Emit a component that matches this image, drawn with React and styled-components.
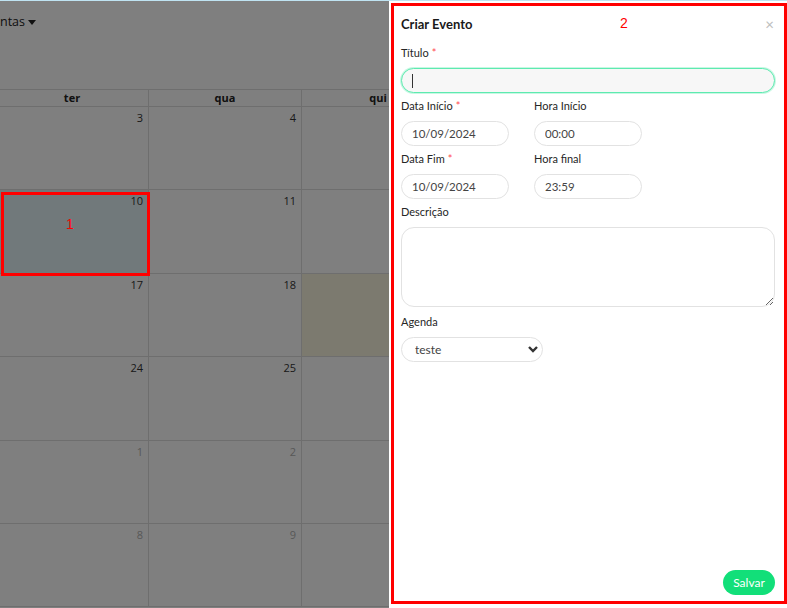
import { createGlobalStyle } from "styled-components";
import styled from "styled-components";

const GlobalStyle = createGlobalStyle`
  body {
    margin: 0;
    font-family: Lato, "Open Sans", sans-serif;
    background: #fff;
  }
`;

const Page = styled.div`
  position: relative;
  width: 787px;
  height: 608px;
  overflow: hidden;
  border-top: 1px solid #bfe3f2;
  box-sizing: border-box;
`;

const Toolbar = styled.div`
  height: 88px;
  box-sizing: border-box;
  padding-top: 12px;
  display: flex;
  align-items: flex-start;
  gap: 3px;
  font-family: "Open Sans", sans-serif;
  font-size: 12.5px;
  color: #222;
`;

const Caret = styled.span`
  display: inline-block;
  margin-top: 7px;
  width: 0;
  height: 0;
  border-left: 4px solid transparent;
  border-right: 4px solid transparent;
  border-top: 5px solid #222;
`;

const Grid = styled.div`
  margin-left: -310px;
  display: grid;
  grid-template-columns: repeat(7, 153px);
  border-top: 1px solid #ddd;
`;

const HeadCell = styled.div`
  height: 17px;
  box-sizing: border-box;
  border-right: 1px solid #ddd;
  border-bottom: 1px solid #ddd;
  font-family: "Open Sans", sans-serif;
  font-size: 11px;
  font-weight: 700;
  color: #222;
  text-align: center;
  line-height: 16px;
`;

const DayCell = styled.div`
  height: 83.4px;
  box-sizing: border-box;
  border-right: 1px solid #ddd;
  border-bottom: 1px solid #ddd;
  background: ${(p) => (p.today ? "#f8f4de" : p.selected ? "#e3f3f7" : "transparent")};
  text-align: right;
  padding: 3px 5px 0 0;
  font-family: "Open Sans", sans-serif;
  font-size: 11px;
  color: ${(p) => (p.other ? "#b0b0b0" : "#333")};
`;

const Mask = styled.div`
  position: absolute;
  inset: 0;
  background: rgba(0, 0, 0, 0.5);
`;

const Drawer = styled.div`
  position: absolute;
  top: 0;
  right: 0;
  bottom: 0;
  width: 398px;
  background: #fff;
  box-sizing: border-box;
  padding: 13px 12px 13px 12px;
  display: flex;
  flex-direction: column;
`;

const Header = styled.div`
  display: flex;
  align-items: center;
  justify-content: space-between;
  height: 20px;
  margin-bottom: 11px;
`;

const Title = styled.div`
  font-size: 13px;
  font-weight: 700;
  color: #1a1a1a;
`;

const Close = styled.span`
  font-size: 15px;
  color: #bdbdbd;
  margin-right: 1px;
  line-height: 1;
`;

const Field = styled.div`
  margin-bottom: ${(p) => p.mb || 5}px;
`;

const Label = styled.div`
  font-size: 11px;
  line-height: 16px;
  color: #262626;
  margin-bottom: 7px;
`;

const Req = styled.span`
  color: #ff4d4f;
  margin-left: 3px;
`;

const Input = styled.input`
  display: block;
  width: ${(p) => p.w || "100%"};
  height: 25px;
  box-sizing: border-box;
  border-radius: 13px;
  border: 1px solid ${(p) => (p.focused ? "#5eeab0" : "#e2e2e2")};
  box-shadow: ${(p) => (p.focused ? "0 0 0 1px rgba(94,234,176,0.35)" : "none")};
  background: ${(p) => (p.focused ? "#f7f7f7" : "#fff")};
  padding: 0 10px;
  font-family: inherit;
  font-size: 11.5px;
  color: #444;
  outline: none;
`;

const Caret2 = styled.span`
  position: absolute;
  left: 11px;
  top: 6px;
  width: 1px;
  height: 14px;
  background: #333;
`;

const InputWrap = styled.div`
  position: relative;
`;

const Row = styled.div`
  display: flex;
  gap: 25px;
`;

const TextArea = styled.textarea`
  display: block;
  width: 100%;
  height: 80px;
  box-sizing: border-box;
  border-radius: 13px;
  border: 1px solid #e2e2e2;
  resize: vertical;
  outline: none;
  font-family: inherit;
  font-size: 12px;
  padding: 6px 10px;
`;

const SelectWrap = styled.div`
  position: relative;
  width: 142px;
`;

const Select = styled.select`
  display: block;
  width: 100%;
  height: 25px;
  box-sizing: border-box;
  border-radius: 13px;
  border: 1px solid #e2e2e2;
  background: #fff;
  appearance: none;
  padding: 0 13px;
  font-family: inherit;
  font-size: 12px;
  color: #444;
  outline: none;
`;

const Chevron = styled.svg`
  position: absolute;
  right: 4px;
  top: 8px;
  pointer-events: none;
`;

const Footer = styled.div`
  margin-top: auto;
  display: flex;
  justify-content: flex-end;
`;

const SaveButton = styled.button`
  width: 52px;
  height: 25px;
  border: none;
  border-radius: 13px;
  background: #12df79;
  color: #fff;
  font-family: inherit;
  font-size: 12px;
  padding: 0;
`;

const Mark = styled.div`
  position: absolute;
  left: ${(p) => p.x}px;
  top: ${(p) => p.y}px;
  width: ${(p) => p.w}px;
  height: ${(p) => p.h}px;
  border: 3px solid #ff0000;
  box-sizing: border-box;
`;

const MarkNum = styled.div`
  position: absolute;
  left: ${(p) => p.x}px;
  top: ${(p) => p.y}px;
  font-family: "Liberation Sans", Arial, sans-serif;
  font-size: 14px;
  color: #ff0000;
`;

const days = ["dom", "seg", "ter", "qua", "qui", "sex", "sáb"];

const weeks = (() => {
  const out = [];
  let d = 1;
  let m = 9;
  for (let w = 0; w < 6; w++) {
    const row = [];
    for (let i = 0; i < 7; i++) {
      row.push({ d, other: m !== 9 });
      d++;
      if (m === 9 && d > 30) {
        d = 1;
        m = 10;
      }
    }
    out.push(row);
  }
  return out;
})();

export default function App() {
  return (
    <Page>
      <GlobalStyle />
      <Toolbar>
        <span>ntas</span>
        <Caret />
      </Toolbar>
      <Grid>
        {days.map((n) => (
          <HeadCell key={n}>{n}</HeadCell>
        ))}
        {weeks.flat().map((c, i) => (
          <DayCell
            key={i}
            other={c.other}
            today={!c.other && c.d === 19}
            selected={!c.other && c.d === 10}
          >
            {c.d}
          </DayCell>
        ))}
      </Grid>
      <Mask />
      <Drawer>
        <Header>
          <Title>Criar Evento</Title>
          <Close>×</Close>
        </Header>
        <Field>
          <Label>
            Título<Req>*</Req>
          </Label>
          <InputWrap>
            <Input focused />
            <Caret2 />
          </InputWrap>
        </Field>
        <Row>
          <Field>
            <Label>
              Data Início<Req>*</Req>
            </Label>
            <Input w="108px" defaultValue="10/09/2024" />
          </Field>
          <Field>
            <Label>Hora Início</Label>
            <Input w="108px" defaultValue="00:00" />
          </Field>
        </Row>
        <Row>
          <Field>
            <Label>
              Data Fim<Req>*</Req>
            </Label>
            <Input w="108px" defaultValue="10/09/2024" />
          </Field>
          <Field>
            <Label>Hora final</Label>
            <Input w="108px" defaultValue="23:59" />
          </Field>
        </Row>
        <Field mb={7}>
          <Label>Descrição</Label>
          <TextArea />
        </Field>
        <Field>
          <Label>Agenda</Label>
          <SelectWrap>
            <Select defaultValue="teste">
              <option value="teste">teste</option>
            </Select>
            <Chevron width="12" height="9" viewBox="0 0 12 9">
              <path d="M2 2 L6 6 L10 2" fill="none" stroke="#333" strokeWidth="2.4" />
            </Chevron>
          </SelectWrap>
        </Field>
        <Footer>
          <SaveButton>Salvar</SaveButton>
        </Footer>
      </Drawer>
      <Mark x={1} y={191} w={149} h={84} />
      <MarkNum x={66} y={215}>1</MarkNum>
      <Mark x={391} y={2} w={396} h={601} />
      <MarkNum x={620} y={14}>2</MarkNum>
    </Page>
  );
}
